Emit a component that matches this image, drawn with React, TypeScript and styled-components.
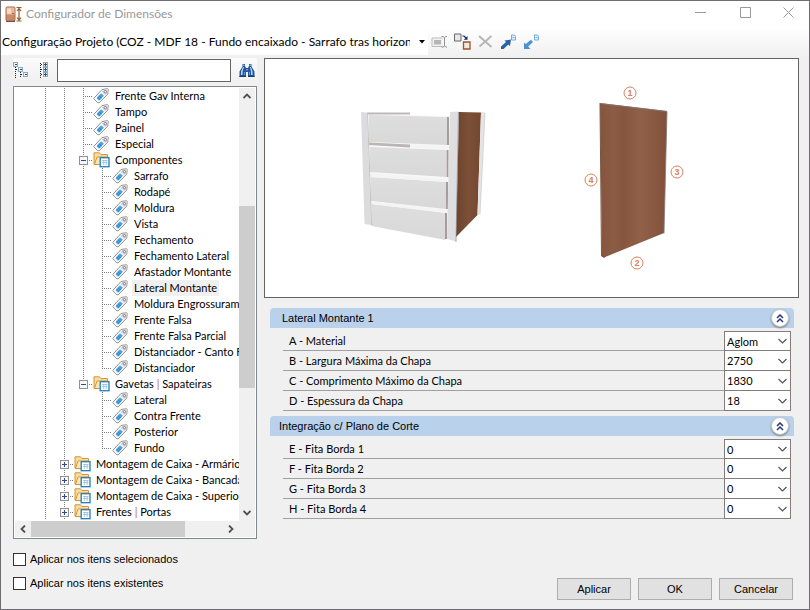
import React, { useState } from "react";
import styled, { createGlobalStyle } from "styled-components";

const GlobalStyle = createGlobalStyle`
  * { box-sizing: border-box; }
  body { margin: 0; background: #f0f0f0; }
  button, input, select { font: inherit; color: inherit; }
`;

const Window = styled.div`
  min-height: 100vh;
  display: flex;
  flex-direction: column;
  border: 1px solid #6f6d72;
  background: #f0f0f0;
  color: #000;
  font: 11px/16px "Liberation Sans", Arial, sans-serif;
`;

const TitleBar = styled.header`
  display: flex;
  align-items: center;
  height: 26px;
  padding-left: 4px;
  background: #fff;
  color: #999;
`;

const Title = styled.h1`
  flex: 1;
  margin: 0 0 0 3px;
  font: 12px/16px Lato, sans-serif;
`;

const CaptionButton = styled.button`
  align-self: flex-start;
  width: 45px;
  height: 23px;
  padding: 0;
  border: 0;
  background: none;
  display: flex;
  align-items: center;
  justify-content: center;
  &:last-child { width: 41px; }
`;

const Toolbar = styled.div`
  display: flex;
  align-items: center;
  height: 30px;
  background: linear-gradient(#fff, #f0f0f0);
`;

const ProjectBox = styled.div`
  position: relative;
  width: 427px;
  height: 26px;
  background: #fff;
`;

const ProjectSelect = styled.select`
  appearance: none;
  width: 409px;
  height: 26px;
  padding: 0 0 0 1px;
  border: 0;
  background: none;
  overflow: hidden;
  font: 12px/18px Lato, sans-serif;
`;

const ProjectArrow = styled.svg`
  position: absolute;
  right: 3px;
  top: 11px;
  pointer-events: none;
`;

const ToolButton = styled.button`
  width: 23px;
  height: 26px;
  padding: 0 0 1px;
  border: 0;
  background: none;
  display: flex;
  align-items: center;
  justify-content: center;
`;

const Body = styled.main`
  flex: 1;
  display: flex;
  gap: 7px;
  padding: 1px 10px 9px 12px;
`;

const Sidebar = styled.section`
  width: 244px;
  flex: none;
  display: flex;
  flex-direction: column;
`;

const SearchBar = styled.div`
  display: flex;
  align-items: center;
  height: 25px;
  background: linear-gradient(#fbfbfb, #f0f0f0);
`;

const IconButton = styled.button`
  width: 22px;
  height: 24px;
  padding: 0;
  border: 0;
  background: none;
  display: flex;
  align-items: center;
  &:last-child { width: 18px; }
`;

const SearchInput = styled.input`
  flex: 1;
  min-width: 0;
  height: 23px;
  margin-right: 8px;
  padding: 0 4px;
  border: 1px solid #646464;
  background: #fff;
`;

const TreePanel = styled.div`
  flex: 1;
  display: grid;
  grid-template: minmax(0, 1fr) 16px / minmax(0, 1fr) 16px;
  margin-top: 3px;
  padding: 1px;
  border: 1px solid #828790;
  background: #fff;
`;

const Tree = styled.ul`
  margin: 0;
  padding: 0 0 0 21px;
  list-style: none;
  overflow: hidden;
  font-family: Lato, sans-serif;
`;

const TreeRow = styled.li`
  display: flex;
  height: 16px;
  white-space: nowrap;
`;

const Expander = styled.button`
  width: 19px;
  height: 16px;
  padding: 0;
  border: 0;
  background: none;
  flex: none;
  display: flex;
`;

const Guide = styled.svg`
  flex: none;
  display: block;
`;

const TreeLabel = styled.button<{ $selected: boolean }>`
  margin-left: 3px;
  padding: 0 2px;
  border: 0;
  line-height: 16px;
  background: ${(p) => (p.$selected ? "#f0f0f0" : "none")};
`;

const Pipe = styled.span`
  color: #b8702c;
`;

const ScrollTrack = styled.div<{ $vertical?: boolean }>`
  display: flex;
  flex-direction: ${(p) => (p.$vertical ? "column" : "row")};
  grid-column: ${(p) => (p.$vertical ? "auto" : "1 / -1")};
  background: #f0f0f0;
`;

const ScrollArrow = styled.button`
  width: 16px;
  height: 16px;
  padding: 0;
  border: 0;
  background: none;
  flex: none;
  display: flex;
  align-items: center;
  justify-content: center;
`;

const ScrollPart = styled.div<{ $grow: number; $thumb?: boolean }>`
  flex: ${(p) => p.$grow} 1 0;
  background: ${(p) => (p.$thumb ? "#cdcdcd" : "none")};
`;

const Checks = styled.div`
  display: flex;
  flex-direction: column;
  gap: 8px;
  padding: 12px 0 9px;
`;

const CheckLabel = styled.label`
  display: flex;
  align-items: center;
  gap: 4px;
`;

const CheckBox = styled.input`
  appearance: none;
  width: 13px;
  height: 13px;
  margin: 0;
  border: 1px solid #333;
  background: #fff;
  &:checked { background: #333; box-shadow: inset 0 0 0 2px #fff; }
`;

const Details = styled.section`
  flex: 1;
  min-width: 0;
  display: flex;
  flex-direction: column;
`;

const Preview = styled.div`
  height: 240px;
  margin-bottom: 10px;
  border: 1px solid #646464;
  background: #fff;
  svg { display: block; width: 100%; height: 100%; }
`;

const Group = styled.section`
  margin: 0 5px 5px 6px;
  font-family: Lato, sans-serif;
`;

const GroupHead = styled.header<{ $inset: number }>`
  display: flex;
  align-items: center;
  justify-content: space-between;
  height: 20px;
  padding: 0 5px 0 ${(p) => p.$inset}px;
  border-radius: 4px 4px 0 0;
  background: #b9d1ea;
`;

const GroupTitle = styled.h2`
  margin: 0;
  font: 11px/16px "Liberation Sans", Arial, sans-serif;
`;

const Collapse = styled.button`
  width: 18px;
  height: 18px;
  padding: 0;
  border: 1px solid #c4c8cf;
  border-radius: 50%;
  background: #fff;
  box-shadow: 0 1px 2px #777;
  display: flex;
  align-items: center;
  justify-content: center;
`;

const Fields = styled.div`
  margin: 3px 3px 0 13px;
`;

const Field = styled.label`
  display: flex;
  height: 20px;
  padding-left: 6px;
  border-bottom: 1px solid #a0a0a0;
  line-height: 20px;
  &:first-child select { border-top: 1px solid #837c7a; }
`;

const FieldName = styled.span`
  flex: 1;
`;

const FieldBox = styled.span`
  position: relative;
  width: 67px;
  height: 20px;
`;

const FieldSelect = styled.select`
  appearance: none;
  display: block;
  width: 67px;
  height: 20px;
  padding: 0 18px 2px 2px;
  border: 0 solid #837c7a;
  border-width: 0 1px 1px;
  border-radius: 0;
  background: #fff;
`;

const FieldArrow = styled.svg`
  position: absolute;
  right: 4px;
  top: 7px;
  pointer-events: none;
`;

const Actions = styled.footer`
  display: flex;
  justify-content: flex-end;
  gap: 7px;
  margin-top: auto;
  padding-right: 6px;
`;

const ActionButton = styled.button`
  width: 74px;
  height: 22px;
  padding: 0;
  border: 1px solid #adadad;
  background: #e1e1e1;
`;

type Line = "full" | "half" | "none";
type Node = { text: string; lines: Line[]; box?: "+" | "-" };

const leaf3 = (text: string): Node => ({ text, lines: ["full", "full", "full"] });
const leaf4 = (text: string): Node => ({ text, lines: ["full", "full", "full", "full"] });
const leafEnd = (text: string): Node => ({ text, lines: ["full", "full", "none", "full"] });
const folder2 = (text: string): Node => ({ text, lines: ["full", "full"], box: "+" });

const nodes: Node[] = [
  ...["Frente Gav Interna", "Tampo", "Painel", "Especial"].map(leaf3),
  { text: "Componentes", lines: ["full", "full", "full"], box: "-" },
  ...[
    "Sarrafo", "Rodapé", "Moldura", "Vista", "Fechamento", "Fechamento Lateral",
    "Afastador Montante", "Lateral Montante", "Moldura Engrossuramento",
    "Frente Falsa", "Frente Falsa Parcial", "Distanciador - Canto F",
  ].map(leaf4),
  { text: "Distanciador", lines: ["full", "full", "full", "half"] },
  { text: "Gavetas | Sapateiras", lines: ["full", "full", "half"], box: "-" },
  ...["Lateral", "Contra Frente", "Posterior"].map(leafEnd),
  { text: "Fundo", lines: ["full", "full", "none", "half"] },
  folder2("Montagem de Caixa - Armários"),
  folder2("Montagem de Caixa - Bancadas"),
  folder2("Montagem de Caixa - Superior"),
  folder2("Frentes | Portas"),
];

function GuideCell({ line, elbow, box }: { line: Line; elbow?: boolean; box?: string }) {
  return (
    <Guide width="19" height="16" viewBox="0 0 19 16" fill="none" stroke="#7d7d7d" shapeRendering="crispEdges">
      {line !== "none" && <path d={line === "full" ? "M9.5 0V16" : "M9.5 0V8"} strokeDasharray="1 1" />}
      {elbow && <path d="M9 8.5H19" strokeDasharray="1 1" />}
      {box && (
        <>
          <rect x="5.500" y="4.500" width="8" height="8" fill="#f8f8f8" stroke="#919191" />
          <path d={box === "+" ? "M7 8.500H12M9.500 6V11" : "M7 8.500H12"} stroke="#31479b" />
        </>
      )}
    </Guide>
  );
}

const TagIcon = () => (
  <Guide width="17" height="16" viewBox="0 0 17 16" fill="none">
    <path d="M.7 10.500 9 1.500 14.500.7 15.200 1.300 14.800 6 6.200 14.800H4.800Z" fill="#fff" stroke="#8f8f93" strokeLinejoin="round" />
    <path d="M9.700 2.200 14.300 1.300 14.300 5.600 12.300 7.300 8.700 4Z" fill="#d8d8db" />
    <path d="m8 5.200 3 2.600L6 12.700 3.500 10.200Z" fill="#4aa3dc" />
    <path d="m5.800 7.500 3 2.700M4.500 9l3 2.600" stroke="#237bbc" strokeWidth=".8" />
    <circle cx="12.300" cy="3.700" r="1.200" fill="#fff" stroke="#77777b" strokeWidth=".9" />
  </Guide>
);

const FolderIcon = () => (
  <Guide width="17" height="16" viewBox="0 0 17 16" fill="none">
    <path d="M1 12.500V.8h5.500L8 2.500h6.500v10Z" fill="#fbdc9a" stroke="#d5933b" />
    <path d="M1.500 12.500 4 5h11.500" stroke="#d5933b" />
    <path d="M2.500 12 4.500 5.500H15V12Z" fill="#fde7b5" />
    <rect x="7.200" y="5.700" width="8.800" height="9" fill="#fff" stroke="#1f7dba" strokeWidth="1.300" />
    <path d="M9 8.500h5.500M9 10.500h5.500M10.700 8v5M13.200 8v5" stroke="#8cc2e3" strokeWidth=".8" />
  </Guide>
);

const DoorIcon = () => (
  <svg width="18" height="17" viewBox="0 0 18 17" fill="none">
    <rect x="1" y="1" width="9" height="14" rx="1" fill="#c98b63" stroke="#a06a50" />
    <path d="M1.500 1.500h8v7h-8z" fill="#eab7a4" />
    <path d="M2 2.500h4v5H2z" fill="#f6dcc6" />
    <circle cx="8" cy="7.500" r=".8" fill="#8b4a35" />
    <path d="M1 15.500h9" stroke="#6e5148" />
    <path d="M11.500 1.500h5M11.500 15h5M14 2v13M12 5l2-2.500L16 5M12 11.500l2 2.500 2-2.500" stroke="#9a5a26" strokeWidth="1.200" />
  </svg>
);

const Chevron = ({ d }: { d: string }) => (
  <svg width="8" height="8" viewBox="0 0 8 8" fill="none" stroke="#505050" strokeWidth="1.800">
    <path d={d} />
  </svg>
);

const ExpandTreeIcon = () => (
  <svg width="18" height="17" viewBox="0 0 18 17" fill="none" shapeRendering="crispEdges">
    <path d="M2.500 5v11M3 7.500h3M7.500 10v6M8 12.500h3" stroke="#222" strokeDasharray="1 1" />
    <path d="M.5 .5h4v4h-4zM5.500 5.500h4v4h-4zM10.500 10.500h4v4h-4z" fill="#eaf4fb" stroke="#8ea9bc" />
    <path d="M2 2.500h2M7 7.500h2M12 12.500h2" stroke="#24536f" />
  </svg>
);

const CollapseTreeIcon = () => (
  <svg width="14" height="17" viewBox="0 0 14 17" fill="none" shapeRendering="crispEdges">
    <path d="M5.500 1v15M6 2.500h3M6 7.500h3M6 12.500h3" stroke="#222" strokeDasharray="1 1" />
    <path d="M8.500 .5h4v4h-4zM8.500 5.500h4v4h-4zM8.500 10.500h4v4h-4z" fill="#eaf4fb" stroke="#8ea9bc" />
    <path d="M9 2.500h3M10.500 1v3M9 7.500h3M10.500 6v3M9 12.500h3M10.500 11v3" stroke="#24536f" />
  </svg>
);

const BinocularsIcon = () => (
  <svg width="16" height="15" viewBox="0 0 16 15">
    <path d="M3.500 1H6v2l1 2h2l1-2V1h2.500v2.500l3 5V14H9V9H7v5H.5V8.500l3-5Z" fill="#2456a0" />
    <path d="M4 4 2 8.500V12h1.500V8.500L5 4ZM11 4l1 4.500V12h1.500V8.500L12 4Z" fill="#b9d8f6" />
    <path d="M4 1.500h1.500V3H4zM10.500 1.500H12V3h-1.500zM7.300 6h1.400v1.500H7.300z" fill="#84aee0" />
    <path d="M5 9h1v3H5zM10 9h1v3h-1z" fill="#6c9ad6" />
    <path d="M.5 12.700H7V14H.5zM9 12.700h6.500V14H9z" fill="#163977" />
  </svg>
);

const RenameIcon = () => (
  <svg width="17" height="14" viewBox="0 0 17 14" fill="none">
    <path d="M11.500 3H1v8.500h10.500" fill="#f2f2f2" stroke="#bbb" />
    <path d="M3 5h7v4.500H3z" fill="#b5b5b5" />
    <path d="M10.500 1.500H12l1.500 1 1.500-1h1M10.500 12H12l1.500-1 1.500 1h1M13.500 2.500V11" stroke="#929292" />
  </svg>
);

const CopyIcon = () => (
  <svg width="17" height="17" viewBox="0 0 17 17" fill="none">
    <path d="M.5 1h6.500v7H.5z" fill="#e8e8e8" stroke="#66666c" />
    <path d="M9.500 9h6.500v7H9.500z" fill="#efe8e1" stroke="#9a5627" strokeWidth="1.300" />
    <path d="M8.500 3H10l2 2" stroke="#17247a" strokeWidth="1.200" />
    <path d="M13.500 3v3.700H9.800Z" fill="#17247a" />
  </svg>
);

const DeleteIcon = () => (
  <svg width="15" height="13" viewBox="0 0 15 13" fill="none" stroke="#b7b7b7" strokeWidth="2">
    <path d="M1 1 13.500 12M13.500 1 1.500 11.500" />
  </svg>
);

const ArrowDocIcon = ({ incoming }: { incoming?: boolean }) => (
  <svg width="17" height="16" viewBox="0 0 17 16" fill="none">
    <path d="M11.500 1h3l1 1.500V6h-4Z" fill="#e4f2fb" stroke="#70acd8" />
    <path d="M12.500 3.500h2" stroke="#70acd8" />
    {incoming ? (
      <path d="M1 15V8.500L2.800 10 7.800 5.800 10 8 5.200 12.500 7.500 15Z" fill="#4e93d0" />
    ) : (
      <path d="m1 12.500 5-4.500-1.500-1.500L11 5.500 10 12 8.300 10.500 3.500 15H1Z" fill="#2864a4" />
    )}
  </svg>
);

const PreviewDrawing = () => (
  <svg viewBox="265 59 533 238" role="img" aria-label="Lateral Montante">
    <defs>
      <linearGradient id="front" x2="0" y2="1">
        <stop stopColor="#dededf" />
        <stop offset="1" stopColor="#d8d8d9" />
      </linearGradient>
      <linearGradient id="side">
        <stop stopColor="#6d432d" />
        <stop offset=".5" stopColor="#7d5037" />
        <stop offset="1" stopColor="#74472f" />
      </linearGradient>
      <linearGradient id="wood">
        <stop stopColor="#84543e" />
        <stop offset=".2" stopColor="#8c5c44" />
        <stop offset=".35" stopColor="#875640" />
        <stop offset=".6" stopColor="#916048" />
        <stop offset=".8" stopColor="#8a5942" />
        <stop offset="1" stopColor="#80503a" />
      </linearGradient>
    </defs>
    <path d="M367 112 410 113 410 115 450 116V238L371 226Z" fill="#f8f8f8" />
    <path d="M367 112.500h43v2h-42Z" fill="#bdb9b9" />
    <g fill="url(#front)">
      <path d="m369 115 78 2v28l-78-3Z" />
      <path d="m370 147 76 3v27l-76-5Z" />
      <path d="m371 177 75 5v27l-75-8Z" />
      <path d="m371.500 204 74 9v27l-74-14Z" />
    </g>
    <path d="m369 142.500 41 2v3l-41-2.500Z" fill="#bbb5b4" />
    <path d="m410 144.500 38 1.500v3l-38-1.500ZM371 173l77 6v3l-78-5ZM371 201l77 9v3l-77-9Z" fill="#f4f4f4" />
    <path d="M447 117h2v28h-2zM446.500 150h2v27h-2zM446 182h2v27h-2zM445 213h2v26h-2z" fill="#a79c9c" />
    <path d="m361 112 6 .5 4 112.500-6.500-1Z" fill="#dcdcde" />
    <path d="M367.500 113 371.500 225" stroke="#c7c1c2" />
    <path d="m450 112 9-.5-3 130-9-2.500Z" fill="#dedee0" />
    <path d="m459 112 22 .5-3.500 102.500L456 237Z" fill="url(#side)" />
    <path d="m458.500 112-2.500 130" stroke="#8d8a91" strokeWidth=".7" />
    <path d="m481 112 4 .5-5 102h-2.500Z" fill="#e4e4e5" />
    <path d="m485 113-5 101" stroke="#cfced1" strokeWidth=".8" />
    <path d="m600 103 67 8-3 122-60 24.500-2-1Z" fill="url(#wood)" />
    <path d="m600 103.500 67 8-3 122" fill="none" stroke="#7f7b78" strokeWidth=".8" />
    <path d="m600 103 1.500 153 3 1.500" fill="none" stroke="#785746" />
    {[
      [630, 93, 1], [637, 263, 2], [677, 172, 3], [591, 180, 4],
    ].map(([x, y, n]) => (
      <g key={n}>
        <circle cx={x} cy={y} r="6" fill="#fff" stroke="#d9805c" />
        <text x={x} y={y + 3} textAnchor="middle" fontSize="9" fontWeight="bold" fill="#d9805c">{n}</text>
      </g>
    ))}
  </svg>
);

const groups = [
  {
    title: "Lateral Montante 1",
    inset: 12,
    fields: [
      ["A - Material", "Aglom"],
      ["B - Largura Máxima da Chapa", "2750"],
      ["C - Comprimento Máximo da Chapa", "1830"],
      ["D - Espessura da Chapa", "18"],
    ],
  },
  {
    title: "Integração c/ Plano de Corte",
    inset: 9,
    fields: [
      ["E - Fita Borda 1", "0"],
      ["F - Fita Borda 2", "0"],
      ["G - Fita Borda 3", "0"],
      ["H - Fita Borda 4", "0"],
    ],
  },
];

function LabelText({ text }: { text: string }) {
  const [before, after] = text.split("|");
  return after ? <>{before}<Pipe>|</Pipe>{after}</> : <>{text}</>;
}

export default function App() {
  const [selected, setSelected] = useState("Lateral Montante");
  return (
    <Window>
      <GlobalStyle />
      <TitleBar>
        <DoorIcon />
        <Title>Configurador de Dimensões</Title>
        <CaptionButton aria-label="Minimizar">
          <svg width="11" height="11" stroke="#999"><path d="M0 5.500H11" /></svg>
        </CaptionButton>
        <CaptionButton aria-label="Maximizar">
          <svg width="11" height="11" fill="none" stroke="#999"><path d="M.5.5h10v10H.5Z" /></svg>
        </CaptionButton>
        <CaptionButton aria-label="Fechar">
          <svg width="11" height="11" stroke="#999"><path d="m.5.5 10 10m0-10-10 10" /></svg>
        </CaptionButton>
      </TitleBar>
      <Toolbar>
        <ProjectBox>
          <ProjectSelect aria-label="Configuração">
            <option>Configuração Projeto (COZ - MDF 18 - Fundo encaixado - Sarrafo tras horizontal)</option>
          </ProjectSelect>
          <ProjectArrow width="6" height="4"><path d="M0 0h6L3 3.500Z" /></ProjectArrow>
        </ProjectBox>
        <ToolButton aria-label="Renomear"><RenameIcon /></ToolButton>
        <ToolButton aria-label="Copiar"><CopyIcon /></ToolButton>
        <ToolButton aria-label="Excluir"><DeleteIcon /></ToolButton>
        <ToolButton aria-label="Exportar"><ArrowDocIcon /></ToolButton>
        <ToolButton aria-label="Importar"><ArrowDocIcon incoming /></ToolButton>
      </Toolbar>
      <Body>
        <Sidebar>
          <SearchBar>
            <IconButton aria-label="Expandir"><ExpandTreeIcon /></IconButton>
            <IconButton aria-label="Recolher"><CollapseTreeIcon /></IconButton>
            <SearchInput type="text" aria-label="Procurar" />
            <IconButton aria-label="Localizar"><BinocularsIcon /></IconButton>
          </SearchBar>
          <TreePanel>
            <Tree>
              {nodes.map(({ text, lines, box }) => (
                <TreeRow key={text}>
                  {lines.map((line, i) => {
                    const last = i === lines.length - 1;
                    return last && box ? (
                      <Expander key={i} aria-label={text} aria-expanded={box === "-"}>
                        <GuideCell line={line} elbow box={box} />
                      </Expander>
                    ) : (
                      <GuideCell key={i} line={line} elbow={last} />
                    );
                  })}
                  {box ? <FolderIcon /> : <TagIcon />}
                  <TreeLabel $selected={selected === text} onClick={() => setSelected(text)}>
                    <LabelText text={text} />
                  </TreeLabel>
                </TreeRow>
              ))}
            </Tree>
            <ScrollTrack $vertical>
              <ScrollArrow aria-label="Acima"><Chevron d="M.5 6 4 2.500 7.500 6" /></ScrollArrow>
              <ScrollPart $grow={102} />
              <ScrollPart $grow={182} $thumb />
              <ScrollPart $grow={117} />
              <ScrollArrow aria-label="Abaixo"><Chevron d="M.5 2 4 5.500 7.500 2" /></ScrollArrow>
            </ScrollTrack>
            <ScrollTrack>
              <ScrollArrow aria-label="Esquerda"><Chevron d="M6 .5 2.500 4 6 7.500" /></ScrollArrow>
              <ScrollPart $grow={152} $thumb />
              <ScrollPart $grow={38} />
              <ScrollArrow aria-label="Direita"><Chevron d="M2 .5 5.500 4 2 7.500" /></ScrollArrow>
              <ScrollArrow as="span" />
            </ScrollTrack>
          </TreePanel>
          <Checks>
            <CheckLabel><CheckBox type="checkbox" />Aplicar nos itens selecionados</CheckLabel>
            <CheckLabel><CheckBox type="checkbox" />Aplicar nos itens existentes</CheckLabel>
          </Checks>
        </Sidebar>
        <Details>
          <Preview><PreviewDrawing /></Preview>
          {groups.map((group) => (
            <Group key={group.title}>
              <GroupHead $inset={group.inset}>
                <GroupTitle>{group.title}</GroupTitle>
                <Collapse aria-label={"Recolher " + group.title}>
                  <svg width="8" height="9" fill="none" stroke="#27357c" strokeWidth="1.500">
                    <path d="M1 4 4 1l3 3M1 8l3-3 3 3" />
                  </svg>
                </Collapse>
              </GroupHead>
              <Fields>
                {group.fields.map(([name, value]) => (
                  <Field key={name}>
                    <FieldName>{name}</FieldName>
                    <FieldBox>
                      <FieldSelect defaultValue={value}><option>{value}</option></FieldSelect>
                      <FieldArrow width="9" height="6" fill="none" stroke="#555" strokeWidth="1.200">
                        <path d="m.5 1 4 4 4-4" />
                      </FieldArrow>
                    </FieldBox>
                  </Field>
                ))}
              </Fields>
            </Group>
          ))}
          <Actions>
            <ActionButton>Aplicar</ActionButton>
            <ActionButton>OK</ActionButton>
            <ActionButton>Cancelar</ActionButton>
          </Actions>
        </Details>
      </Body>
    </Window>
  );
}
